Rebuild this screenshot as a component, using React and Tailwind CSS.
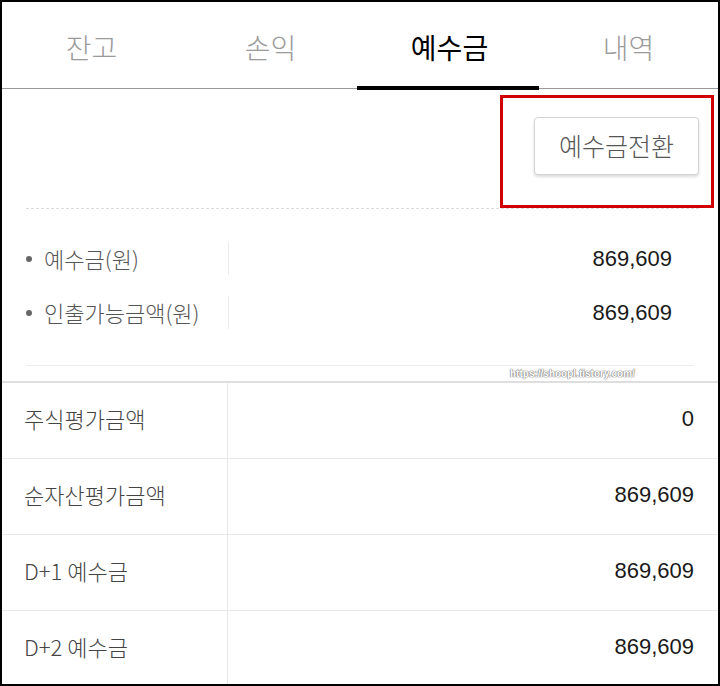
import React from "react";

const tabs = ["잔고", "손익", "예수금", "내역"];

const infoRows = [
  { label: "예수금(원)", value: "869,609" },
  { label: "인출가능금액(원)", value: "869,609" }
];

const tableRows = [
  { label: "주식평가금액", value: "0" },
  { label: "순자산평가금액", value: "869,609" },
  { label: "D+1 예수금", value: "869,609" },
  { label: "D+2 예수금", value: "869,609" }
];

const kr = "font-['Noto_Sans_CJK_KR','Noto_Sans',sans-serif]";
const num = "font-['Liberation_Sans',Arial,sans-serif]";

export default function App() {
  return (
    <div className={`relative w-[720px] h-[686px] overflow-hidden border-2 border-black bg-white font-light ${kr}`}>
      {/* Tabs */}
      <div className="flex border-b border-[#9a9a9a]">
        {tabs.map((t, i) => {
          const active = i === 2;
          return (
            <div
              key={t}
              className={`relative flex-1 h-[86px] pt-[4px] flex items-center justify-center text-[28px] ${
                active ? "text-black font-normal" : "text-[#9b9b9b]"
              }`}
            >
              {t}
              {active && (
                <span className="absolute left-[-3px] right-0 -bottom-[2px] h-[4px] bg-black" />
              )}
            </div>
          );
        })}
      </div>

      {/* Convert button */}
      <div className="ml-6 mr-[19px] pt-[28px] pb-[33px] border-b border-dashed border-[#dcdcdc] flex justify-end">
        <button className="h-[58px] w-[165px] rounded-[4px] border border-[#d4d4d4] bg-white text-[25px] text-[#555] shadow-[0_2px_3px_rgba(0,0,0,0.14)]">
          예수금전환
        </button>
      </div>

      {/* Deposit info */}
      <div className="mx-6 pt-[33px] pb-[36px] border-b border-[#ececec] flex flex-col gap-[21px]">
        {infoRows.map((r) => (
          <div key={r.label} className="flex items-center h-[33px]">
            <div className="w-[203px] h-full flex items-center gap-[12px] border-r border-[#ececec]">
              <span className="w-[6px] h-[6px] rounded-full bg-[#666]" />
              <span className="text-[22px] text-[#555]">{r.label}</span>
            </div>
            <div className={`flex-1 text-right pr-[22px] text-[22px] font-normal text-[#1a1a1a] ${num}`}>{r.value}</div>
          </div>
        ))}
      </div>

      {/* Table */}
      <div className="mt-[15px] border-t-2 border-[#dedede]">
        {tableRows.map((r) => (
          <div key={r.label} className="flex h-[76px] border-b border-[#e8e8e8]">
            <div className="w-[226px] flex items-center pl-[22px] pb-[4px] border-r border-[#e8e8e8] text-[22px] text-[#444]">
              {r.label}
            </div>
            <div className={`flex-1 flex items-center justify-end pr-[24px] pb-[4px] text-[22px] font-normal text-[#1a1a1a] ${num}`}>
              {r.value}
            </div>
          </div>
        ))}
      </div>

      {/* Watermark */}
      <span className="absolute left-[508px] top-[364px] text-[10px] font-bold text-white font-['Liberation_Sans',Arial,sans-serif] [text-shadow:0_0_1px_#777,0_0_1px_#777,0_0_1px_#777]">
        https://shoopl.tistory.com/
      </span>

      {/* Annotation box */}
      <div className="absolute left-[498px] top-[93px] w-[214px] h-[113px] border-[3px] border-[#d00000]" />
    </div>
  );
}
